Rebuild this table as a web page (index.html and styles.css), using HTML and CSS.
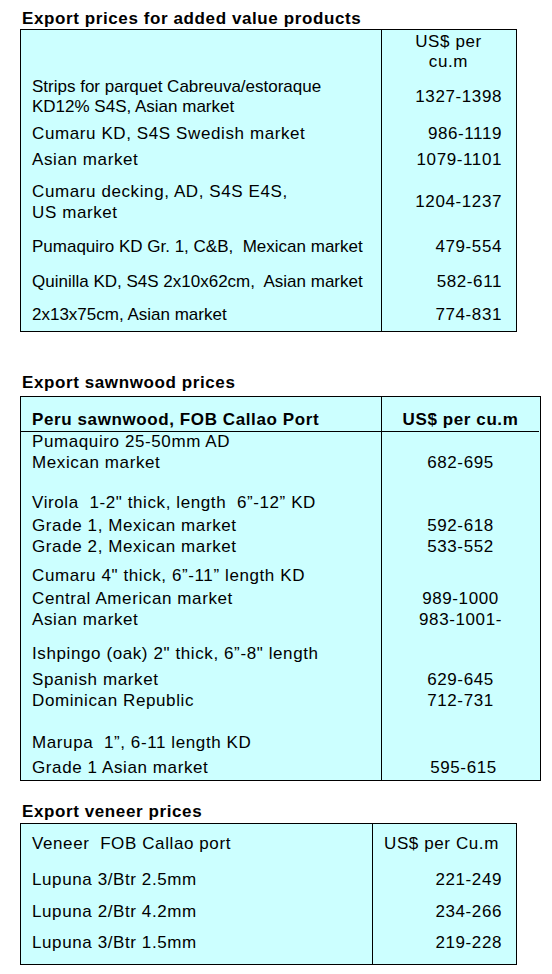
FILE: index.html
```html
<!DOCTYPE html>
<html>
<head>
<meta charset="utf-8">
<link rel="stylesheet" href="styles.css">
</head>
<body>
<div class="page">
  <h2 class="ttl t1">Export prices for added value products</h2>
  <div class="tbl tbl1">
    <div class="row g2"><div class="c l"></div><div class="c r ctr">US$ per<br>cu.m</div></div>
    <div class="row g5"><div class="c l tight">Strips for parquet Cabreuva/estoraque<br>KD12% S4S, Asian market</div><div class="c r">1327-1398</div></div>
    <div class="row g7"><div class="c l">Cumaru KD, S4S Swedish market</div><div class="c r">986-1119</div></div>
    <div class="row g6"><div class="c l">Asian market</div><div class="c r">1079-1101</div></div>
    <div class="row g11"><div class="c l lh21">Cumaru decking, AD, S4S E4S,<br>US market</div><div class="c r">1204-1237</div></div>
    <div class="row g14"><div class="c l tight">Pumaquiro KD Gr. 1, C&amp;B,  Mexican market</div><div class="c r">479-554</div></div>
    <div class="row g15"><div class="c l tight">Quinilla KD, S4S 2x10x62cm,  Asian market</div><div class="c r">582-611</div></div>
    <div class="row g13 b6"><div class="c l tight">2x13x75cm, Asian market</div><div class="c r">774-831</div></div>
  </div>

  <h2 class="ttl t2">Export sawnwood prices</h2>
  <div class="tbl tbl2">
    <div class="row head"><div class="c l">Peru sawnwood, FOB Callao Port</div><div class="c r ctr">US$ per cu.m</div></div>
    <div class="row g0"><div class="c l">Pumaquiro 25-50mm AD</div><div class="c r ctr"></div></div>
    <div class="row g1"><div class="c l">Mexican market</div><div class="c r ctr">682-695</div></div>
    <div class="row g20"><div class="c l">Virola  1-2" thick, length  6”-12” KD</div><div class="c r ctr"></div></div>
    <div class="row g3"><div class="c l">Grade 1, Mexican market</div><div class="c r ctr">592-618</div></div>
    <div class="row g1"><div class="c l">Grade 2, Mexican market</div><div class="c r ctr">533-552</div></div>
    <div class="row g9"><div class="c l">Cumaru 4" thick, 6”-11” length KD</div><div class="c r ctr"></div></div>
    <div class="row g3"><div class="c l">Central American market</div><div class="c r ctr">989-1000</div></div>
    <div class="row g1"><div class="c l">Asian market</div><div class="c r ctr">983-1001-</div></div>
    <div class="row g14"><div class="c l">Ishpingo (oak) 2" thick, 6”-8" length</div><div class="c r ctr"></div></div>
    <div class="row g6"><div class="c l">Spanish market</div><div class="c r ctr">629-645</div></div>
    <div class="row g1"><div class="c l">Dominican Republic</div><div class="c r ctr">712-731</div></div>
    <div class="row g22"><div class="c l">Marupa  1”, 6-11 length KD</div><div class="c r ctr"></div></div>
    <div class="row g5 b2"><div class="c l">Grade 1 Asian market</div><div class="c r ctr nudge">595-615</div></div>
  </div>

  <h2 class="ttl t3">Export veneer prices</h2>
  <div class="tbl tbl3">
    <div class="row g10"><div class="c l">Veneer  FOB Callao port</div><div class="c r lft">US$ per Cu.m</div></div>
    <div class="row g16"><div class="c l">Lupuna 3/Btr 2.5mm</div><div class="c r">221-249</div></div>
    <div class="row g12"><div class="c l">Lupuna 2/Btr 4.2mm</div><div class="c r">234-266</div></div>
    <div class="row g11 b11"><div class="c l">Lupuna 3/Btr 1.5mm</div><div class="c r">219-228</div></div>
  </div>
</div>
</body>
</html>
```

FILE: styles.css
```css
html, body {
  margin: 0;
  padding: 0;
  background: #ffffff;
}

.page {
  padding-left: 20px;
  font-family: "Liberation Sans", Arial, sans-serif;
  font-size: 17px;
  line-height: 20px;
  letter-spacing: 0.6px;
  color: #000000;
}

.ttl {
  margin: 0;
  padding-left: 2px;
  font-size: 17px;
  line-height: 20px;
  font-weight: bold;
}

.t1 { margin-top: 9px; }
.t2 { margin-top: 41px; margin-bottom: 3px; }
.t3 { margin-top: 21px; margin-bottom: 1px; }

.tbl {
  border: 1px solid #000000;
  background: #ccffff;
  display: flex;
  flex-direction: column;
}

.tbl1 { width: 495px; }
.tbl2 { width: 519px; }
.tbl3 { width: 495px; }

.row {
  display: grid;
  --g: 0px;
  --b: 0px;
}

.tbl1 .row { grid-template-columns: 360px 134px; }
.tbl2 .row { grid-template-columns: 360px 158px; }
.tbl3 .row { grid-template-columns: 351px 143px; }

.c {
  padding-top: var(--g);
  padding-bottom: var(--b);
  white-space: pre;
}

.l { padding-left: 11px; }

.tight { letter-spacing: 0; }

.r {
  border-left: 1px solid #000000;
  display: flex;
  align-items: center;
  justify-content: flex-end;
  padding-right: 13px;
}

.r.ctr {
  justify-content: center;
  text-align: center;
  padding-right: 0;
}

.r.lft {
  justify-content: flex-start;
  padding-left: 11px;
  padding-right: 0;
}

.nudge { padding-left: 6px; }

.lh21 { line-height: 21px; }

.head .c {
  padding-top: 13px;
  padding-bottom: 1px;
  border-bottom: 1px solid #000000;
  font-weight: bold;
}

.g0 { --g: 0px; }
.g1 { --g: 1px; }
.g2 { --g: 2px; }
.g3 { --g: 3px; }
.g5 { --g: 5px; }
.g6 { --g: 6px; }
.g7 { --g: 7px; }
.g9 { --g: 9px; }
.g10 { --g: 10px; }
.g11 { --g: 11px; }
.g12 { --g: 12px; }
.g13 { --g: 13px; }
.g14 { --g: 14px; }
.g15 { --g: 15px; }
.g16 { --g: 16px; }
.g20 { --g: 20px; }
.g22 { --g: 22px; }

.b2 { --b: 2px; }
.b6 { --b: 6px; }
.b11 { --b: 11px; }
```
